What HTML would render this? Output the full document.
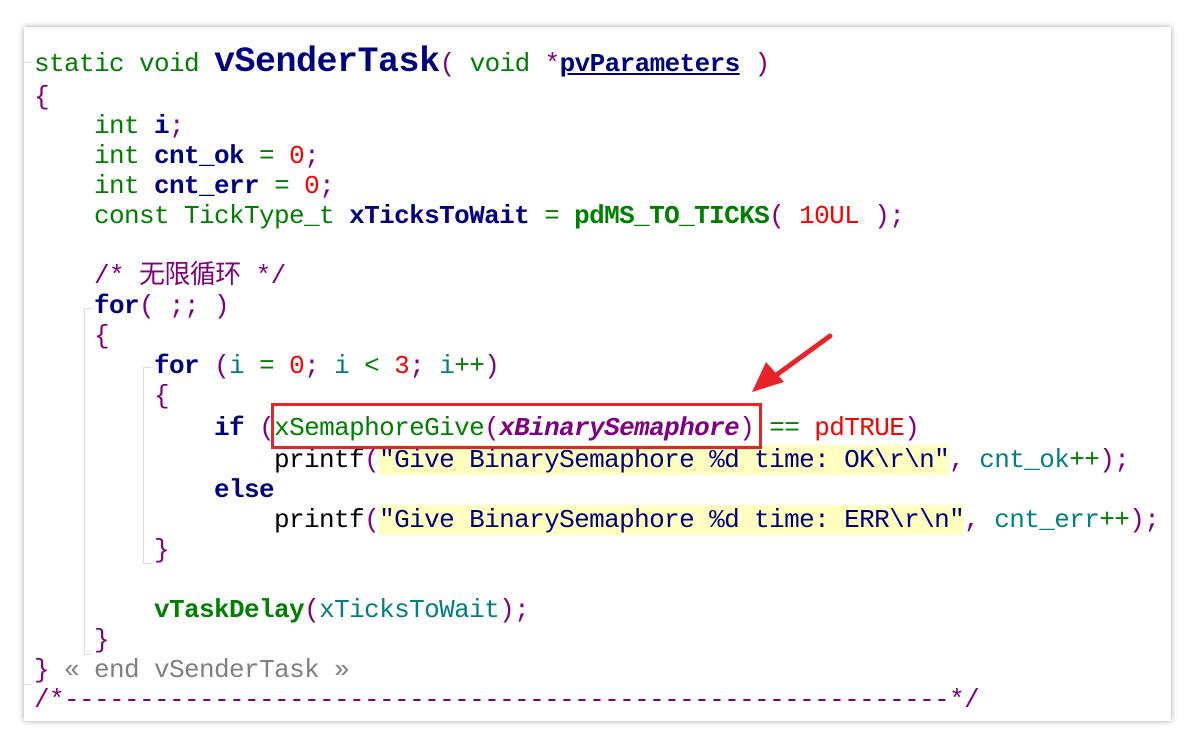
<!DOCTYPE html>
<html><head><meta charset="utf-8"><style>
body{margin:0;width:1190px;height:742px;background:#fff;position:relative;overflow:hidden;font-family:"Liberation Mono","Noto Sans CJK SC",monospace;}
.panel{position:absolute;left:24px;top:27px;width:1147px;height:694px;background:#fff;box-shadow:0 0 6px rgba(0,0,0,.35);}
.l{position:absolute;left:34px;white-space:pre;font-size:26px;letter-spacing:-0.6px;line-height:30px;height:30px;}
.g{color:#008000}.b{color:#000080;font-weight:bold}.p{color:#800080}.r{color:#ff0000}.t{color:#008080}
.s{color:#000080;background:#ffffc0}.k{color:#000080;font-weight:bold}.gb{color:#008000;font-weight:bold}
.gr{color:#808080}.bk{color:#000}.i{color:#800080;font-weight:bold;font-style:italic}
.vl{position:absolute;width:1px;background:#ddd}
.hl{position:absolute;height:1px;background:#ddd}
</style></head><body>
<div class="panel"></div>
<div class="hl" style="left:24px;top:62px;width:8px"></div>
<div class="vl" style="left:84px;top:308px;height:347px"></div>
<div class="hl" style="left:84px;top:308px;width:8px"></div>
<div class="hl" style="left:84px;top:654px;width:8px"></div>
<div class="vl" style="left:143px;top:367px;height:197px"></div>
<div class="hl" style="left:143px;top:367px;width:8px"></div>
<div class="hl" style="left:143px;top:563px;width:8px"></div>
<div class="hl" style="left:24px;top:684px;width:8px"></div>

<div class="l" style="top:47px"><span class="g">static void </span><span class="b" style="font-size:35px;letter-spacing:-0.5px">vSenderTask</span><span class="p">( </span><span class="g">void </span><span class="p">*</span><span class="b" style="text-decoration:underline">pvParameters</span><span class="p"> )</span></div>
<div class="l" style="top:82px"><span class="p">{</span></div>
<div class="l" style="top:111px">    <span class="g">int </span><span class="b">i</span><span class="p">;</span></div>
<div class="l" style="top:141px">    <span class="g">int </span><span class="b">cnt_ok</span><span class="g"> = </span><span class="r">0</span><span class="p">;</span></div>
<div class="l" style="top:171px">    <span class="g">int </span><span class="b">cnt_err</span><span class="g"> = </span><span class="r">0</span><span class="p">;</span></div>
<div class="l" style="top:201px">    <span class="g">const TickType_t </span><span class="b">xTicksToWait</span><span class="g"> = </span><span class="gb">pdMS_TO_TICKS</span><span class="p">( </span><span class="r">10UL</span><span class="p"> );</span></div>
<div class="l" style="top:261px">    <span class="p">/* 无限循环 */</span></div>
<div class="l" style="top:291px">    <span class="k">for</span><span class="p">( ;; )</span></div>
<div class="l" style="top:321px">    <span class="p">{</span></div>
<div class="l" style="top:351px">        <span class="k">for</span> <span class="p">(</span><span class="t">i</span><span class="g"> = </span><span class="r">0</span><span class="p">; </span><span class="t">i</span><span class="g"> &lt; </span><span class="r">3</span><span class="p">; </span><span class="t">i</span><span class="g">++</span><span class="p">)</span></div>
<div class="l" style="top:381px">        <span class="p">{</span></div>
<div class="l" style="top:413px">            <span class="k">if</span> <span class="p">(</span><span class="g">xSemaphoreGive</span><span class="p">(</span><span class="i">xBinarySemaphore</span><span class="p">)</span><span class="g"> == </span><span class="r">pdTRUE</span><span class="p">)</span></div>
<div class="l" style="top:445px">                <span class="bk">printf</span><span class="p">(</span><span class="s">"Give BinarySemaphore %d time: OK\r\n"</span><span class="p">, </span><span class="t">cnt_ok</span><span class="g">++</span><span class="p">);</span></div>
<div class="l" style="top:475px">            <span class="k">else</span></div>
<div class="l" style="top:505px">                <span class="bk">printf</span><span class="p">(</span><span class="s">"Give BinarySemaphore %d time: ERR\r\n"</span><span class="p">, </span><span class="t">cnt_err</span><span class="g">++</span><span class="p">);</span></div>
<div class="l" style="top:535px">        <span class="p">}</span></div>
<div class="l" style="top:595px">        <span class="gb">vTaskDelay</span><span class="p">(</span><span class="t">xTicksToWait</span><span class="p">);</span></div>
<div class="l" style="top:625px">    <span class="p">}</span></div>
<div class="l" style="top:655px"><span class="p">}</span> <span class="gr">« end vSenderTask »</span></div>
<div class="l" style="top:685px"><span class="p">/*-----------------------------------------------------------*/</span></div>

<div style="position:absolute;left:271px;top:403px;width:485px;height:40px;border:3px solid #e8242a;"></div>
<svg style="position:absolute;left:0;top:0" width="1190" height="742">
<line x1="830" y1="336" x2="775" y2="376" stroke="#e8242a" stroke-width="5" stroke-linecap="round"/>
<polygon points="752,392 766,362 784,382" fill="#e8242a"/>
</svg>
</body></html>
